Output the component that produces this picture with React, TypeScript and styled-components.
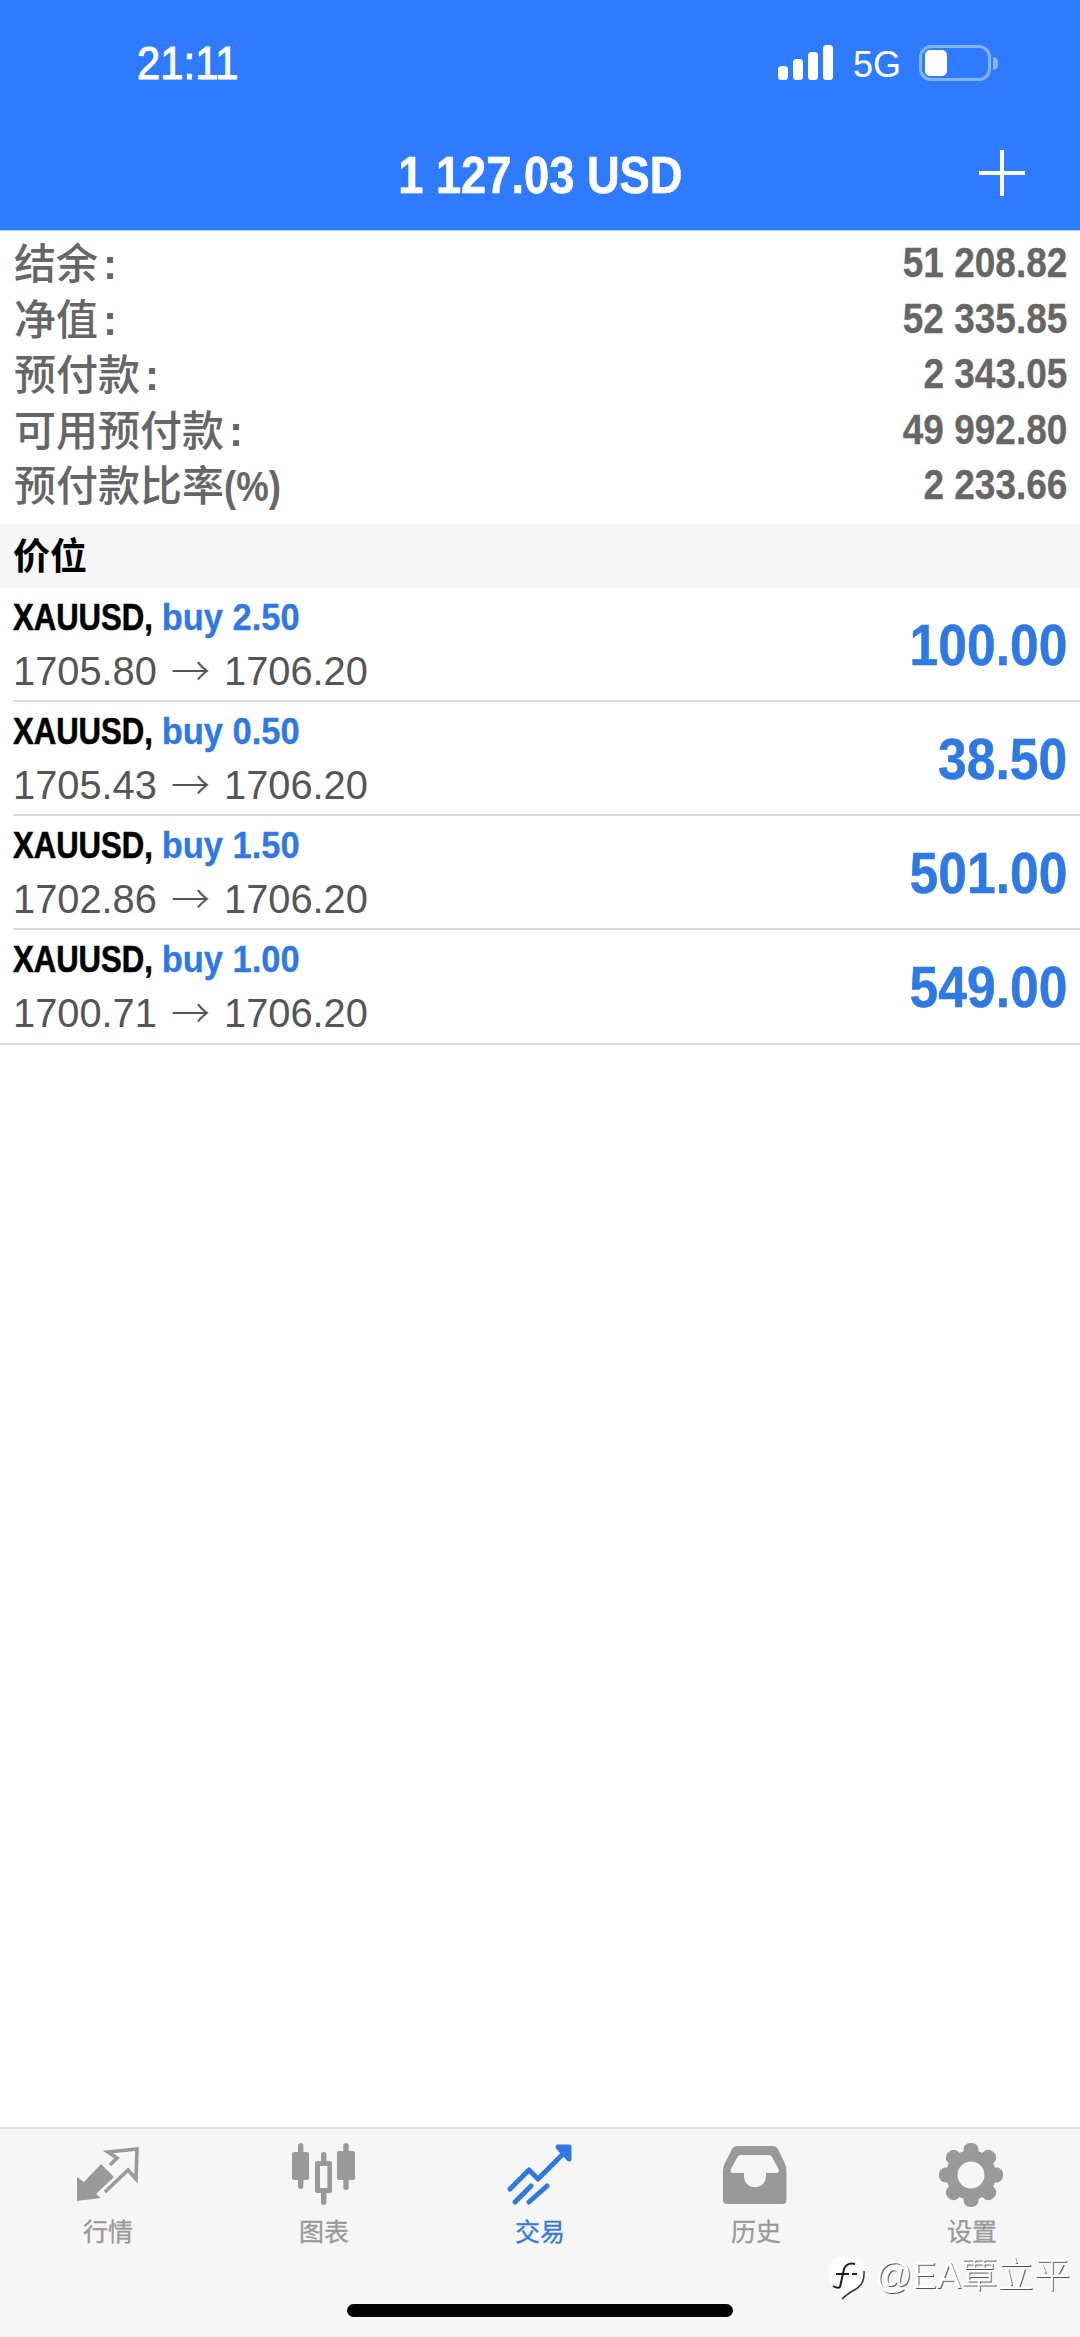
import React from "react";
import styled, { createGlobalStyle } from "styled-components";

const Global = createGlobalStyle`
  html, body { margin: 0; padding: 0; background: #fff; }
  #root { width: 1080px; height: 2337px; }
`;

const SANS = `"Liberation Sans", "Noto Sans CJK SC", sans-serif`;
const BLUE = "#2f79e2";

const Page = styled.div`
  position: relative;
  width: 1080px;
  height: 2337px;
  display: flex;
  flex-direction: column;
  background: #fff;
  overflow: hidden;
  font-family: ${SANS};
`;

const Header = styled.header`
  height: 230px;
  flex: none;
  background: #2f7bff;
  border-bottom: 1px solid #a9cdff;
  display: flex;
  flex-direction: column;
  color: #fff;
`;

const StatusBar = styled.div`
  height: 100px;
  display: flex;
  align-items: center;
  padding: 26px 82px 0 137px;
  box-sizing: border-box;
`;

const Narrow = styled.span<{ $ratio?: number; $origin?: string }>`
  display: inline-block;
  white-space: pre;
  transform: scaleX(${(p) => p.$ratio ?? 0.86});
  transform-origin: ${(p) => p.$origin ?? "left"} center;
`;

const Clock = styled.div`
  font-size: 47px;
  line-height: 50px;
  font-weight: 400;
  -webkit-text-stroke: 1px #fff;
  flex: 1;
`;

const StatusRight = styled.div`
  display: flex;
  align-items: center;
`;

const NetLabel = styled.span`
  font-size: 36px;
  line-height: 40px;
  margin: 4px 18px 0 20px;
`;

const Battery = styled.div`
  width: 72px;
  height: 36px;
  box-sizing: border-box;
  border: 3px solid rgba(255, 255, 255, 0.42);
  border-radius: 12px;
  padding: 2px 3px;
  display: flex;
`;

const BatteryFill = styled.div`
  width: 22px;
  background: #fff;
  border-radius: 5px;
`;

const BatteryNub = styled.div`
  width: 5px;
  height: 13px;
  margin-left: 2px;
  background: rgba(255, 255, 255, 0.45);
  border-radius: 0 6px 6px 0;
`;

const TitleBar = styled.div`
  height: 130px;
  position: relative;
  display: flex;
  align-items: center;
  justify-content: center;
  padding-top: 20px;
  box-sizing: border-box;
`;

const Title = styled.div`
  font-size: 52px;
  line-height: 60px;
  font-weight: 700;
  -webkit-text-stroke: 0.6px #fff;
`;

const PlusButton = styled.svg`
  position: absolute;
  left: 978px;
  top: 49px;
`;

const Summary = styled.section`
  padding: 4px 13px 11px 14px;
  display: flex;
  flex-direction: column;
  flex: none;
`;

const SummaryRow = styled.div`
  height: 55.5px;
  display: flex;
  align-items: center;
  justify-content: space-between;
  color: #666;
  font-weight: 700;
`;

const SummaryLabel = styled.span`
  font-size: 42px;
  line-height: 55px;
  font-weight: 500;
  font-family: "Noto Sans CJK SC", sans-serif;
  white-space: nowrap;
`;

const LabelColon = styled.span`
  font-family: "Liberation Sans", sans-serif;
  font-weight: 700;
  margin-left: 5px;
`;

const LabelUnit = styled.span`
  font-family: "Liberation Sans", sans-serif;
  font-weight: 700;
  font-size: 43px;
`;

const SummaryValue = styled.span`
  font-size: 43px;
  line-height: 55px;
  -webkit-text-stroke: 0.3px #666;
`;

const SectionHead = styled.div`
  flex: none;
  height: 64px;
  background: #f7f7f7;
  display: flex;
  align-items: center;
  padding: 0 0 4px 13px;
  box-sizing: border-box;
  font-family: "Noto Sans CJK SC", sans-serif;
  font-size: 37px;
  font-weight: 700;
  color: #000;
`;

const PositionList = styled.div`
  flex: 1;
  display: flex;
  flex-direction: column;
`;

const PositionRow = styled.div<{ $last?: boolean }>`
  flex: none;
  height: ${(p) => (p.$last ? "115px" : "114px")};
  box-sizing: border-box;
  display: flex;
  align-items: center;
  justify-content: space-between;
  margin-left: ${(p) => (p.$last ? "0" : "13px")};
  padding: 0 13px 0 ${(p) => (p.$last ? "13px" : "0")};
  border-bottom: 2px solid #dadada;
`;

const PositionInfo = styled.div`
  display: flex;
  flex-direction: column;
`;

const PositionTitle = styled.div`
  height: 51px;
  font-size: 37px;
  line-height: 51px;
  font-weight: 700;
  color: #000;
`;

const Symbol = styled.span`
  -webkit-text-stroke: 0.6px #000;
`;

const Side = styled.span`
  display: inline-block;
  color: ${BLUE};
  transform: scaleX(1.11);
  transform-origin: left center;
  -webkit-text-stroke: 0.3px ${BLUE};
`;

const Prices = styled.div`
  font-size: 39.8px;
  line-height: 50px;
  color: #555;
  white-space: pre;
`;

const PriceArrow = styled.span`
  font-family: "Noto Sans CJK SC", sans-serif;
  font-weight: 300;
  font-size: 39px;
  margin: 0 3px;
`;

const Profit = styled.div`
  font-size: 58px;
  line-height: 70px;
  margin-top: 2px;
  font-weight: 700;
  color: ${BLUE};
  -webkit-text-stroke: 0.5px ${BLUE};
`;

const TabBar = styled.nav`
  flex: none;
  height: 210px;
  box-sizing: border-box;
  background: #f6f6f6;
  border-top: 2px solid #dedede;
  display: grid;
  grid-template-columns: repeat(5, 216px);
  align-items: start;
  padding-top: 13px;
`;

const Tab = styled.div<{ $active?: boolean }>`
  display: flex;
  flex-direction: column;
  align-items: center;
  color: ${(p) => (p.$active ? BLUE : "#999")};
`;

const TabIcon = styled.svg`
  display: block;
  height: 68px;
  width: 68px;
`;

const TabLabel = styled.span`
  font-family: "Noto Sans CJK SC", sans-serif;
  font-size: 25px;
  line-height: 34px;
  margin-top: 3px;
  font-weight: 400;
  -webkit-text-stroke: 0.3px currentColor;
`;

const HomeBar = styled.div`
  position: absolute;
  left: 347px;
  top: 2304px;
  width: 386px;
  height: 13px;
  border-radius: 7px;
  background: #000;
`;

const Watermark = styled.div`
  position: absolute;
  left: 828px;
  top: 2257px;
  display: flex;
  align-items: flex-start;
  gap: 9px;
  color: #fff;
`;

const WatermarkText = styled.span`
  font-family: "Liberation Sans", "Noto Sans CJK SC", sans-serif;
  font-size: 36.5px;
  line-height: 38px;
  font-weight: 300;
  white-space: nowrap;
  text-shadow: 1px 1px 0 rgba(30, 30, 30, 0.75);
`;

const summary = [
  { label: "结余", value: "51 208.82" },
  { label: "净值", value: "52 335.85" },
  { label: "预付款", value: "2 343.05" },
  { label: "可用预付款", value: "49 992.80" },
];

const positions = [
  { lot: "2.50", open: "1705.80", profit: "100.00" },
  { lot: "0.50", open: "1705.43", profit: "38.50" },
  { lot: "1.50", open: "1702.86", profit: "501.00" },
  { lot: "1.00", open: "1700.71", profit: "549.00" },
];

const QuotesIcon = () => (
  <TabIcon viewBox="0 0 68 68" fill="none">
    <path fill="currentColor" d="M3 59 L3 35 L10 40 L27 22 L40 35 L22 52 L27 56 Z" />
    <path
      stroke="currentColor"
      strokeWidth="3.6"
      d="M36 23 L43 16 L34 10 L63 7 L62 37 L54 28 L31 50"
    />
  </TabIcon>
);

const ChartIcon = () => (
  <TabIcon viewBox="0 0 68 68" fill="currentColor">
    <rect x="2" y="10" width="17" height="28" rx="2" />
    <rect x="8" y="1" width="5.4" height="46" rx="2.7" />
    <rect x="47" y="9" width="18" height="29" rx="2" />
    <rect x="53.3" y="1" width="5.4" height="47" rx="2.7" />
    <rect x="31" y="10" width="5.4" height="53" rx="2.7" />
    <rect x="25" y="19" width="17" height="32" rx="2" />
    <rect x="30" y="24" width="7.4" height="22" fill="#f6f6f6" />
  </TabIcon>
);

const TradeIcon = () => (
  <TabIcon viewBox="0 0 68 68" fill="none">
    <g stroke="currentColor" strokeWidth="5" strokeLinecap="round" strokeLinejoin="round">
      <path d="M4 47 L23 28 L32 37 L60 9" />
      <path d="M9 60 L25 44" />
      <path d="M23 60 L41 44" />
      <path d="M52 5 L63 5 L63 17 Z" fill="currentColor" />
    </g>
  </TabIcon>
);

const HistoryIcon = () => (
  <TabIcon viewBox="0 0 68 68">
    <path
      fill="currentColor"
      fillRule="evenodd"
      d="M15 4 H51 Q54 4 56 7 L63 22 Q64.500 25 64.500 29 V58 Q64.500 62 60.500 62 H5 Q1 62 1 58 V29 Q1 25 2.500 22 L10 7 Q12 4 15 4 Z
         M19 13 Q16.500 13 15.500 15 L9 27 Q7.500 31 11 31 H22 V34 C22 49 44 49 44 34 V31 H54.500 Q58 31 56.500 27 L50 15 Q49 13 46.500 13 Z"
    />
  </TabIcon>
);

const GEAR_TEETH = [0, 45, 90, 135, 180, 225, 270, 315];

const SettingsIcon = () => (
  <TabIcon viewBox="0 0 68 68">
    <g transform="translate(33 33)">
      <circle r="25" fill="currentColor" />
      {GEAR_TEETH.map((deg) => (
        <rect
          key={deg}
          x="-7.5"
          y="-32"
          width="15"
          height="16"
          rx="6.5"
          fill="currentColor"
          transform={`rotate(${deg})`}
        />
      ))}
      <circle r="13.5" fill="#f6f6f6" />
    </g>
  </TabIcon>
);

const WatermarkLogo = () => (
  <svg width="38" height="43" viewBox="0 0 38 43">
    <path
      fill="#fff"
      d="M12 0 H25 Q37 1 37 14 Q37 27 28 32 Q19 37 14 42 Q16 37 11 35 Q1 31 1 15 Q2 1 12 0 Z"
    />
    <path
      fill="none"
      stroke="#1d1d1d"
      strokeWidth="2"
      d="M27 7 Q19 5 16 12 L12 30 Q10 32 5 29 M8 17 H21 M24 17 H29"
    />
    <path
      fill="none"
      stroke="#333"
      strokeWidth="1.5"
      d="M36 14 Q37 27 28 32 Q19 37 14 42"
    />
  </svg>
);

export default function App() {
  return (
    <Page>
      <Global />
      <Header>
        <StatusBar>
          <Clock>
            <Narrow $ratio={0.89}>21:11</Narrow>
          </Clock>
          <StatusRight>
            <svg width="55" height="36" viewBox="0 0 55 36" fill="#fff">
              <rect x="0" y="21" width="10" height="14" rx="3.5" />
              <rect x="15" y="14" width="10" height="21" rx="3.5" />
              <rect x="30" y="7" width="10" height="28" rx="3.5" />
              <rect x="45" y="0" width="10" height="35" rx="3.5" />
            </svg>
            <NetLabel>5G</NetLabel>
            <Battery>
              <BatteryFill />
            </Battery>
            <BatteryNub />
          </StatusRight>
        </StatusBar>
        <TitleBar>
          <Title>
            <Narrow $ratio={0.87} $origin="center">
              1 127.03 USD
            </Narrow>
          </Title>
          <PlusButton width="48" height="48" viewBox="0 0 48 48">
            <path d="M24 1 V47 M1 24 H47" stroke="#fff" strokeWidth="4" fill="none" />
          </PlusButton>
        </TitleBar>
      </Header>

      <Summary>
        {summary.map((row) => (
          <SummaryRow key={row.label}>
            <SummaryLabel>
              {row.label}
              <LabelColon>:</LabelColon>
            </SummaryLabel>
            <SummaryValue>
              <Narrow $origin="right">{row.value}</Narrow>
            </SummaryValue>
          </SummaryRow>
        ))}
        <SummaryRow>
          <SummaryLabel>
            预付款比率
            <LabelUnit>
              <Narrow $ratio={0.85}>(%)</Narrow>
            </LabelUnit>
          </SummaryLabel>
          <SummaryValue>
            <Narrow $origin="right">2 233.66</Narrow>
          </SummaryValue>
        </SummaryRow>
      </Summary>

      <SectionHead>价位</SectionHead>

      <PositionList>
        {positions.map((p, i) => (
          <PositionRow key={p.open} $last={i === positions.length - 1}>
            <PositionInfo>
              <PositionTitle>
                <Narrow $ratio={0.84}>
                  <Symbol>XAUUSD, </Symbol>
                  <Side>buy {p.lot}</Side>
                </Narrow>
              </PositionTitle>
              <Prices>
                {p.open} <PriceArrow>→</PriceArrow> 1706.20
              </Prices>
            </PositionInfo>
            <Profit>
              <Narrow $ratio={0.89} $origin="right">
                {p.profit}
              </Narrow>
            </Profit>
          </PositionRow>
        ))}
      </PositionList>

      <TabBar>
        <Tab>
          <QuotesIcon />
          <TabLabel>行情</TabLabel>
        </Tab>
        <Tab>
          <ChartIcon />
          <TabLabel>图表</TabLabel>
        </Tab>
        <Tab $active>
          <TradeIcon />
          <TabLabel>交易</TabLabel>
        </Tab>
        <Tab>
          <HistoryIcon />
          <TabLabel>历史</TabLabel>
        </Tab>
        <Tab>
          <SettingsIcon />
          <TabLabel>设置</TabLabel>
        </Tab>
      </TabBar>

      <HomeBar />
      <Watermark>
        <WatermarkLogo />
        <WatermarkText>@EA覃立平</WatermarkText>
      </Watermark>
    </Page>
  );
}
